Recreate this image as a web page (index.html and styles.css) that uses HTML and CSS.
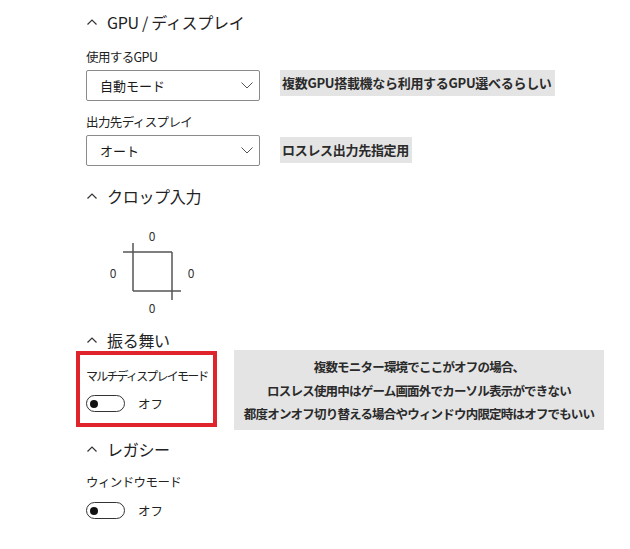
FILE: index.html
```html
<!DOCTYPE html>
<html lang="ja">
<head>
<meta charset="utf-8">
<link rel="stylesheet" href="styles.css">
</head>
<body>
<div class="page">
  <div class="heading h1">
    <svg class="chev" width="10" height="6" viewBox="0 0 10 6"><path d="M0.5 5.5 L5 1 L9.5 5.5" fill="none" stroke="#333" stroke-width="1.2"/></svg>
    <span>GPU / ディスプレイ</span>
  </div>
  <div class="label l1">使用するGPU</div>
  <div class="row dd-row1">
    <div class="dropdown"><span>自動モード</span>
      <svg width="12" height="7" viewBox="0 0 12 7"><path d="M0.5 0.5 L6 6 L11.5 0.5" fill="none" stroke="#555" stroke-width="1"/></svg>
    </div>
    <div class="note">複数GPU搭載機なら利用するGPU選べるらしい</div>
  </div>
  <div class="label l2">出力先ディスプレイ</div>
  <div class="row dd-row2">
    <div class="dropdown"><span>オート</span>
      <svg width="12" height="7" viewBox="0 0 12 7"><path d="M0.5 0.5 L6 6 L11.5 0.5" fill="none" stroke="#555" stroke-width="1"/></svg>
    </div>
    <div class="note">ロスレス出力先指定用</div>
  </div>
  <div class="heading h2">
    <svg class="chev" width="10" height="6" viewBox="0 0 10 6"><path d="M0.5 5.5 L5 1 L9.5 5.5" fill="none" stroke="#333" stroke-width="1.2"/></svg>
    <span>クロップ入力</span>
  </div>
  <div class="crop">
    <svg class="crop-lines" width="120" height="120" viewBox="0 0 120 120">
      <g stroke="#555" stroke-width="1.5" fill="none">
        <path d="M37 44 H86"/>
        <path d="M47 35 V83"/>
        <path d="M47 83 H95"/>
        <path d="M86 44 V92"/>
      </g>
    </svg>
    <span class="cv cv-top">0</span>
    <span class="cv cv-left">0</span>
    <span class="cv cv-right">0</span>
    <span class="cv cv-bottom">0</span>
  </div>
  <div class="heading h3">
    <svg class="chev" width="10" height="6" viewBox="0 0 10 6"><path d="M0.5 5.5 L5 1 L9.5 5.5" fill="none" stroke="#333" stroke-width="1.2"/></svg>
    <span>振る舞い</span>
  </div>
  <div class="behavior">
    <div class="redbox">
      <div class="label tight">マルチディスプレイモード</div>
      <div class="toggle-row">
        <div class="toggle"><div class="knob"></div></div>
        <span class="toggle-text">オフ</span>
      </div>
    </div>
    <div class="bignote">
      <div>複数モニター環境でここがオフの場合、</div>
      <div>ロスレス使用中はゲーム画面外でカーソル表示ができない</div>
      <div>都度オンオフ切り替える場合やウィンドウ内限定時はオフでもいい</div>
    </div>
  </div>
  <div class="heading h4">
    <svg class="chev" width="10" height="6" viewBox="0 0 10 6"><path d="M0.5 5.5 L5 1 L9.5 5.5" fill="none" stroke="#333" stroke-width="1.2"/></svg>
    <span>レガシー</span>
  </div>
  <div class="label l5">ウィンドウモード</div>
  <div class="toggle-row t5">
    <div class="toggle"><div class="knob"></div></div>
    <span class="toggle-text">オフ</span>
  </div>
</div>
</body>
</html>
```
FILE: styles.css
```css
html, body {
  margin: 0;
  padding: 0;
  background: #ffffff;
}
body {
  width: 630px;
  height: 549px;
  overflow: hidden;
  font-family: "Noto Sans CJK JP", "Noto Sans", sans-serif;
  color: #1f1f1f;
}
.page {
  padding-left: 86px;
}
.heading {
  display: flex;
  align-items: center;
  height: 24px;
  font-size: 16px;
  color: #222;
  letter-spacing: -0.3px;
}
.heading .chev {
  margin-left: 1px;
  margin-right: 10px;
}
.h1 { margin-top: 10px; }
.h2 { margin-top: 18px; }
.h3 { margin-top: 0; }
.h4 { margin-top: 7px; }

.label {
  height: 18px;
  line-height: 18px;
  font-size: 12.5px;
  letter-spacing: -0.6px;
  color: #222;
  white-space: nowrap;
}
.label.tight {
  font-size: 12px;
  letter-spacing: -1.8px;
}
.l1 { margin-top: 14px; }
.l2 { margin-top: 12px; }
.l5 { margin-top: 12px; }

.row {
  display: flex;
  align-items: flex-start;
  margin-top: 4px;
}
.dropdown {
  box-sizing: border-box;
  width: 174px;
  height: 31px;
  border: 1px solid #8a8a8a;
  border-radius: 2px;
  display: flex;
  align-items: center;
  justify-content: space-between;
  padding: 0 6px 0 13px;
  font-size: 13px;
  color: #1a1a1a;
}
.note {
  margin-left: 20px;
  background: #e4e4e4;
  font-weight: bold;
  font-size: 13px;
  color: #2a2a2a;
  height: 26px;
  line-height: 26px;
  padding: 0 3px 0 2px;
  letter-spacing: -0.3px;
}
.dd-row2 .note { margin-top: 2px; }

.crop {
  position: relative;
  height: 120px;
}
.crop-lines {
  position: absolute;
  left: 0;
  top: 0;
}
.cv {
  position: absolute;
  font-size: 12px;
  line-height: 14px;
  color: #333;
  width: 10px;
  text-align: center;
  margin-left: -5px;
  margin-top: -7px;
}
.cv-top { left: 66px; top: 28px; }
.cv-left { left: 27px; top: 65px; }
.cv-right { left: 105px; top: 65px; }
.cv-bottom { left: 66px; top: 100px; }

.behavior {
  display: flex;
  align-items: flex-start;
  margin-left: -10px;
  margin-top: -2px;
}
.redbox {
  box-sizing: border-box;
  width: 141px;
  height: 76px;
  margin-top: 1px;
  border: 4px solid #e0242c;
  padding: 12px 0 0 6px;
}
.toggle-row {
  display: flex;
  align-items: center;
  margin-top: 9px;
}
.toggle {
  box-sizing: border-box;
  width: 39px;
  height: 17px;
  border: 1.5px solid #333;
  border-radius: 9px;
  display: flex;
  align-items: center;
  padding-left: 3px;
}
.knob {
  width: 8px;
  height: 8px;
  border-radius: 50%;
  background: #111;
}
.toggle-text {
  margin-left: 13px;
  font-size: 12.5px;
  color: #222;
}
.bignote {
  margin-left: 17px;
  width: 370px;
  height: 80px;
  box-sizing: border-box;
  background: #e4e4e4;
  font-weight: bold;
  font-size: 12.5px;
  letter-spacing: -0.8px;
  color: #2a2a2a;
  text-align: center;
  padding-top: 5px;
  line-height: 23.5px;
}
.t5 {
  margin-top: 10px;
}
```
